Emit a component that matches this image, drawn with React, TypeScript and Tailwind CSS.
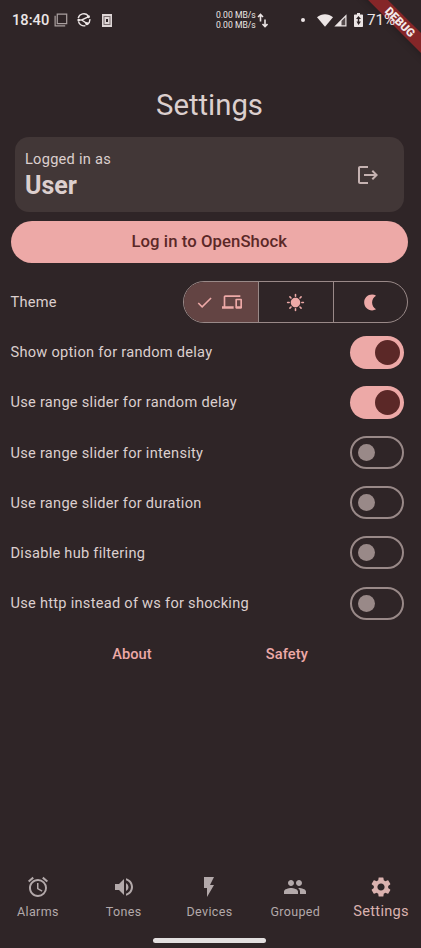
import type { ReactNode } from "react";
import { MdAlarm, MdCheck, MdDevices, MdFlashOn, MdLogout, MdPeople, MdSettings, MdSunny, MdVolumeUp } from "react-icons/md";

function StatusBar() {
  return (
    <header className="relative z-10 flex h-10 items-center pl-3 text-[#ece5e5]">
      <span className="w-[42px] text-[14.700px] font-medium leading-5">18:40</span>
      <svg className="h-[14px] w-[14px]" viewBox="0 0 15 15" fill="none" stroke="#aaa0a0" strokeWidth="1.3">
        <path d="M3.500 1.200h10.100v10.100H3.500z" />
        <path d="M1.200 3v10.700H12" />
      </svg>
      <svg className="ml-[9px] h-[14px] w-[14px]" viewBox="0 0 15 15" fill="none" stroke="#ece5e5" strokeWidth="1.500">
        <path d="M1.300 5.500A6.200 6.200 0 0 1 12 3M13.700 6.500a6.200 6.200 0 0 1-2.700 6M9 13.600A6.200 6.200 0 0 1 1.500 9" />
        <path d="M1 7.500h4l7-3.300M5 7.500l5 3.400" />
        <circle cx="12.300" cy="4" r="1.600" fill="#ece5e5" stroke="none" />
        <circle cx="10.500" cy="11.300" r="1.700" fill="#ece5e5" stroke="none" />
        <circle cx="1.800" cy="7.500" r="1.400" fill="#ece5e5" stroke="none" />
      </svg>
      <svg className="ml-[11px] h-[13px] w-[10px]" viewBox="0 0 10 13">
        <path d="M0 0h10v13H0z" fill="#ded6d6" />
        <path d="M1.500 2h7v9h-7z" fill="#786d6e" />
        <path d="M2.500 3h5v7h-5z" fill="#ded6d6" />
        <path d="M4 5h2v3H4z" fill="#2f2527" />
      </svg>
      <div className="ml-[104px] w-[41px] whitespace-nowrap pt-[1px] text-[8.600px] leading-[9.500px]">
        <div>0.00 MB/s</div>
        <div>0.00 MB/s</div>
      </div>
      <svg className="h-[15px] w-[11px]" viewBox="0 0 11 15" fill="none" stroke="#ece5e5" strokeWidth="1.600">
        <path d="M3.500 8.500V1.500M1 4l2.500-2.500L6 4M8 6.500v7M5.500 11 8 13.500l2.500-2.500" />
      </svg>
      <span className="ml-[33px] h-1 w-1 rounded-full bg-[#ece5e5]" />
      <svg className="ml-[12px] h-[13px] w-4" viewBox="0 0 16 13" fill="#ece5e5">
        <path d="M0 3.300C4.600-.7 11.400-.7 16 3.300L8 12.700z" />
      </svg>
      <svg className="ml-[1px] h-[13px] w-[13px]" viewBox="0 0 13 13">
        <path d="M.3 12.500 12.500.3v12.200z" fill="#ece5e5" />
        <path d="M7.500 7.100 11.300 3.300v8H7.500z" fill="#554b4c" />
      </svg>
      <svg className="ml-[7px] h-[14px] w-[9px]" viewBox="0 0 9 14">
        <path d="M3 0h3v1.500h2.200q.8 0 .8.800v10.900q0 .8-.8.800H.8q-.8 0-.8-.8V2.300q0-.8.8-.8H3z" fill="#ece5e5" />
        <path d="M4.500 3 2 6h1.800v2.500H2.500l2 3.500L7 8.500H5.200V6H7z" fill="#2f2527" />
      </svg>
      <span className="ml-[4px] text-[15.200px] leading-5">71%</span>
    </header>
  );
}

function Toggle({ on }: { on: boolean }) {
  return on ? (
    <button role="switch" aria-checked="true" className="flex h-[33px] w-[54px] items-center justify-end rounded-full bg-[#eda9a7] pr-1">
      <span className="h-[25px] w-[25px] rounded-full bg-[#5b2827]" />
    </button>
  ) : (
    <button role="switch" aria-checked="false" className="flex h-[33px] w-[54px] items-center rounded-full border-2 border-[#998988] pl-[6px]">
      <span className="h-[17px] w-[17px] rounded-full bg-[#998988]" />
    </button>
  );
}

const options = [
  { label: "Show option for random delay", on: true },
  { label: "Use range slider for random delay", on: true },
  { label: "Use range slider for intensity", on: false },
  { label: "Use range slider for duration", on: false },
  { label: "Disable hub filtering", on: false },
  { label: "Use http instead of ws for shocking", on: false },
];

function NavItem({ icon, label, active = false }: { icon: ReactNode; label: string; active?: boolean }) {
  return (
    <a className={active ? "flex w-[85.800px] shrink-0 flex-col items-center text-[#dbb2af]" : "flex w-[85.800px] shrink-0 flex-col items-center text-[#b3a9aa]"}>
      {icon}
      <span className={active ? "mt-[1.500px] text-[14.600px] leading-5 tracking-[0.300px]" : "mt-[3px] text-[12.500px] leading-5 tracking-[0.350px]"}>{label}</span>
    </a>
  );
}

export default function App() {
  return (
    <div className="relative flex h-[948px] w-[421px] flex-col overflow-hidden bg-[#2f2527] font-[Roboto,sans-serif] text-[#dccfce]">
      <StatusBar />
      <main className="flex flex-1 flex-col px-[10px]">
        <h1 className="mt-[45px] h-[40px] pr-[2px] text-center text-[29.300px] leading-[40px]">Settings</h1>
        <section className="ml-[4.500px] mr-[7px] mt-3 flex h-[75px] items-center justify-between rounded-[14px] bg-[#423737] pl-[10.500px] pr-[24px]">
          <div className="pt-[1px]">
            <p className="text-[14.600px] leading-5 tracking-[0.260px]">Logged in as</p>
            <p className="text-[25px] font-bold leading-[33px]">User</p>
          </div>
          <MdLogout className="h-6 w-6 text-[#c5b2b1]" />
        </section>
        <button className="ml-[0.500px] mr-[3px] mt-[9px] h-[42px] rounded-full bg-[#eda9a7] text-[16.700px] font-medium leading-[42px] tracking-[0.080px] text-[#5b2827]">Log in to OpenShock</button>
        <div className="ml-[0.500px] mr-[3px] mt-[17.500px] flex h-[43px] items-center justify-between">
          <span className="pt-[2px] text-[14.600px] tracking-[0.260px]">Theme</span>
          <div className="flex h-[42px] w-[225px] divide-x divide-[#998988] overflow-hidden rounded-full border border-[#998988] text-[#eda9a7]">
            <button className="flex w-[75px] items-center justify-center gap-[8px] bg-[#634443] pr-[6px]">
              <MdCheck className="h-[19px] w-[19px]" />
              <MdDevices className="h-5 w-5" />
            </button>
            <button className="flex w-[75px] items-center justify-center pr-[2px]"><MdSunny className="h-[19px] w-[19px]" /></button>
            <button className="flex flex-1 items-center justify-center">
              <svg className="h-[19px] w-[19px]" viewBox="0 0 24 24" fill="currentColor">
                <path d="M14 2c1.820 0 3.530.5 5 1.350-2.990 1.730-5 4.950-5 8.650s2.010 6.920 5 8.650A9.960 9.960 0 0 1 14 22C8.480 22 4 17.520 4 12S8.480 2 14 2z" />
              </svg>
            </button>
          </div>
        </div>
        <div className="mt-[3.500px] flex flex-col pl-[0.500px] pr-[7px]">
          {options.map((o) => (
            <label key={o.label} className="flex h-[50.200px] items-center justify-between">
              <span className="pt-[2px] text-[14.600px] tracking-[0.270px]">{o.label}</span>
              <Toggle on={o.on} />
            </label>
          ))}
        </div>
        <div className="mt-[15.500px] flex justify-center gap-[114px] pr-[1px] text-[14.600px] font-medium leading-5 tracking-[0.100px] text-[#eda9a7]">
          <a>About</a>
          <a>Safety</a>
        </div>
      </main>
      <nav className="-ml-[5px] flex h-[63px]">
        <NavItem icon={<MdAlarm className="h-6 w-6" />} label="Alarms" />
        <NavItem icon={<MdVolumeUp className="h-6 w-6" />} label="Tones" />
        <NavItem icon={<MdFlashOn className="h-6 w-6" />} label="Devices" />
        <NavItem icon={<MdPeople className="h-6 w-6" />} label="Grouped" />
        <NavItem icon={<MdSettings className="h-6 w-6" />} label="Settings" active />
      </nav>
      <div className="mb-[5px] ml-[153px] h-[5px] w-[113px] rounded-full bg-[#e3dfdf]" />
      <div className="absolute right-[-43.500px] top-[15px] h-[14px] w-[130px] rotate-45 bg-[#852628] text-center text-[11.500px] font-black leading-[14px] text-[#f3e9e9] shadow-md">DEBUG</div>
    </div>
  );
}
